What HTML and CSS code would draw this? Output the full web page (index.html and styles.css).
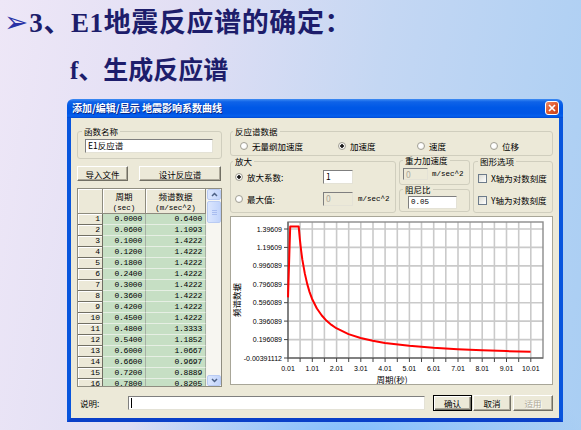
FILE: index.html
```html
<!DOCTYPE html>
<html lang="zh-CN">
<head>
<meta charset="utf-8">
<title>E1地震反应谱的确定</title>
<link rel="stylesheet" href="styles.css">
</head>
<body>
<div class="slide">
  <h1 class="h1"><span class="arrow">➢</span>3、E1地震反应谱的确定：</h1>
  <h2 class="h2">f、生成反应谱</h2>
  <div class="dialog">
    <div class="titlebar">
      <span class="title">添加/编辑/显示 地震影响系数曲线</span>
      <span class="close"><svg width="8" height="8" viewBox="0 0 8 8"><path d="M1 1L7 7M7 1L1 7" stroke="#fff" stroke-width="1.7"/></svg></span>
    </div>
    <div class="client">
      <div class="main">
        <div class="leftcol">
          <fieldset class="group g-name"><legend>函数名称</legend>
            <div class="edit name-edit">E1反应谱</div>
          </fieldset>
          <div class="btnrow"><button class="btn b-import">导入文件</button><button class="btn b-design">设计反应谱</button></div>
          <div class="grid">
            <div class="tbl">
              <div class="row hrow"><div class="hd"></div><div class="hd">周期<br><span class="unit">(sec)</span></div><div class="hd">频谱数据<br><span class="unit">(m/sec^2)</span></div></div>
              <div class="row"><div class="rn">1</div><div class="c">0.0000</div><div class="c">0.6400</div></div>
              <div class="row"><div class="rn">2</div><div class="c">0.0600</div><div class="c">1.1093</div></div>
              <div class="row"><div class="rn">3</div><div class="c">0.1000</div><div class="c">1.4222</div></div>
              <div class="row"><div class="rn">4</div><div class="c">0.1200</div><div class="c">1.4222</div></div>
              <div class="row"><div class="rn">5</div><div class="c">0.1800</div><div class="c">1.4222</div></div>
              <div class="row"><div class="rn">6</div><div class="c">0.2400</div><div class="c">1.4222</div></div>
              <div class="row"><div class="rn">7</div><div class="c">0.3000</div><div class="c">1.4222</div></div>
              <div class="row"><div class="rn">8</div><div class="c">0.3600</div><div class="c">1.4222</div></div>
              <div class="row"><div class="rn">9</div><div class="c">0.4200</div><div class="c">1.4222</div></div>
              <div class="row"><div class="rn">10</div><div class="c">0.4500</div><div class="c">1.4222</div></div>
              <div class="row"><div class="rn">11</div><div class="c">0.4800</div><div class="c">1.3333</div></div>
              <div class="row"><div class="rn">12</div><div class="c">0.5400</div><div class="c">1.1852</div></div>
              <div class="row"><div class="rn">13</div><div class="c">0.6000</div><div class="c">1.0667</div></div>
              <div class="row"><div class="rn">14</div><div class="c">0.6600</div><div class="c">0.9697</div></div>
              <div class="row"><div class="rn">15</div><div class="c">0.7200</div><div class="c">0.8889</div></div>
              <div class="row"><div class="rn">16</div><div class="c">0.7800</div><div class="c">0.8205</div></div>
            </div>
            <div class="scroll">
              <div class="sb"><svg width="7" height="5" viewBox="0 0 7 5"><path d="M1 4L3.5 1.5L6 4" stroke="#4d6185" stroke-width="1.5" fill="none"/></svg></div>
              <div class="sb thumb"><svg width="5" height="5" viewBox="0 0 5 5"><path d="M0 0.5H5M0 2.5H5M0 4.5H5" stroke="#a9bdf0" stroke-width="1"/></svg></div>
              <div class="track"></div>
              <div class="sb"><svg width="7" height="5" viewBox="0 0 7 5"><path d="M1 1L3.5 3.5L6 1" stroke="#4d6185" stroke-width="1.5" fill="none"/></svg></div>
            </div>
          </div>
        </div>
        <div class="rightcol">
          <fieldset class="group g-data"><legend>反应谱数据</legend>
            <div class="radios">
              <span class="opt o1"><span class="rb"></span>无量纲加速度</span>
              <span class="opt o2"><span class="rb on"></span>加速度</span>
              <span class="opt o3"><span class="rb"></span>速度</span>
              <span class="opt o4"><span class="rb"></span>位移</span>
            </div>
          </fieldset>
          <div class="optrow">
            <fieldset class="group g-scale"><legend>放大</legend>
              <div class="srow r1"><span class="opt so"><span class="rb on"></span>放大系数:</span><div class="edit num">1</div></div>
              <div class="srow r2"><span class="opt so"><span class="rb"></span>最大值:</span><div class="edit num dis">0</div><span class="u">m/sec^2</span></div>
            </fieldset>
            <div class="midcol">
              <fieldset class="group g-grav"><legend>重力加速度</legend>
                <div class="srow"><div class="edit gnum dis">0</div><span class="u">m/sec^2</span></div>
              </fieldset>
              <fieldset class="group g-damp"><legend>阻尼比</legend>
                <div class="edit dnum">0.05</div>
              </fieldset>
            </div>
            <fieldset class="group g-graph"><legend>图形选项</legend>
              <span class="chk"><span class="cb"></span>X轴为对数刻度</span>
              <span class="chk c2"><span class="cb"></span>Y轴为对数刻度</span>
            </fieldset>
          </div>
          <div class="chart">
            <svg class="plot" width="321" height="167" viewBox="0 0 321 167">
              <path class="gridl" d="M69.1 5V141M81.3 5V141M93.4 5V141M105.6 5V141M117.7 5V141M129.8 5V141M142 5V141M154.1 5V141M166.3 5V141M178.4 5V141M190.5 5V141M202.7 5V141M214.8 5V141M227 5V141M239.1 5V141M251.2 5V141M263.4 5V141M275.5 5V141M287.7 5V141M299.8 5V141M57 12H312M57 30.4H312M57 48.9H312M57 67.3H312M57 85.7H312M57 104.1H312M57 122.6H312"/>
              <rect class="frame" x="57" y="5" width="255" height="136"/>
              <path class="axis" d="M57 5V141H312"/>
              <path class="ticks" d="M57 141V145M69.1 141V145M81.3 141V145M93.4 141V145M105.6 141V145M117.7 141V145M129.8 141V145M142 141V145M154.1 141V145M166.3 141V145M178.4 141V145M190.5 141V145M202.7 141V145M214.8 141V145M227 141V145M239.1 141V145M251.2 141V145M263.4 141V145M275.5 141V145M287.7 141V145M299.8 141V145M53 141H57M53 122.6H57M53 104.1H57M53 85.7H57M53 67.3H57M53 48.9H57M53 30.4H57M53 12H57"/>
              <g class="ylab">
                <text x="51" y="14.5">1.39609</text>
                <text x="51" y="32.9">1.19609</text>
                <text x="51" y="51.4">0.996089</text>
                <text x="51" y="69.8">0.796089</text>
                <text x="51" y="88.2">0.596089</text>
                <text x="51" y="106.6">0.396089</text>
                <text x="51" y="125.1">0.196089</text>
                <text x="51" y="143.5">-0.00391112</text>
              </g>
              <g class="xlab">
                <text x="57" y="153.5">0.01</text>
                <text x="81.3" y="153.5">1.01</text>
                <text x="105.6" y="153.5">2.01</text>
                <text x="129.8" y="153.5">3.01</text>
                <text x="154.1" y="153.5">4.01</text>
                <text x="178.4" y="153.5">5.01</text>
                <text x="202.7" y="153.5">6.01</text>
                <text x="227" y="153.5">7.01</text>
                <text x="251.2" y="153.5">8.01</text>
                <text x="275.5" y="153.5">9.01</text>
                <text x="299.8" y="153.5">10.01</text>
              </g>
              <text class="ttl" x="161" y="165.5">周期(秒)</text>
              <text class="ttl" transform="translate(8.5 83) rotate(-90)">频谱数据</text>
              <path class="curve" d="M57 80.4L59.2 9.6L67.7 9.6L68.9 22.7L70.1 33.4L71.3 42.4L73.8 56.4L76.2 66.9L78.6 75.1L81 81.7L85.9 91.5L90.8 98.5L95.6 103.8L100.5 107.9L105.3 111.2L117.5 117.1L129.6 121L141.7 123.8L153.9 125.9L178.2 128.8L202.4 130.8L226.7 132.2L251 133.3L275.3 134.1L299.6 134.7"/>
            </svg>
          </div>
        </div>
      </div>
      <div class="bottom">
        <span class="lbl">说明:</span>
        <div class="edit desc"><span class="caret"></span></div>
        <button class="btn def">确认</button>
        <button class="btn cancel">取消</button>
        <button class="btn apply">适用</button>
      </div>
    </div>
  </div>
</div>
</body>
</html>
```

FILE: styles.css
```css
* { box-sizing: border-box; }
html, body { margin: 0; padding: 0; }
body {
  width: 581px; height: 430px; overflow: hidden;
  background:
    radial-gradient(ellipse 230px 110px at 355px 445px, rgba(120,186,255,0.9), rgba(120,186,255,0)),
    linear-gradient(100deg, #eee7f7 0%, #e2dff4 28%, #c4d7f3 60%, #a9cef3 100%);
  font-family: "Noto Sans CJK SC", sans-serif;
}
.h1 {
  margin: 0; padding: 6px 0 0 4px;
  font: 700 27px/32px "Liberation Serif", "Noto Sans CJK SC", serif;
  letter-spacing: 0.6px;
  color: #1d1d6b; white-space: nowrap;
}
.arrow { font: 400 29px/32px "DejaVu Sans", sans-serif; color: #2a33a6; margin-right: 1px; letter-spacing: 0; }
.h2 {
  margin: 17px 0 0; padding-left: 70px;
  font: 700 25px/30px "Liberation Serif", "Noto Sans CJK SC", serif;
  color: #1d1d6b;
}
.dialog { margin: 13px 0 0 67px; width: 496px; height: 323px; display: flex; flex-direction: column; }
.titlebar {
  height: 19px; flex: none; display: flex; align-items: center; justify-content: space-between;
  padding: 0 4px 1px 5px; border-radius: 6px 6px 0 0;
  background: linear-gradient(#3f8cf3 0%, #0f63e8 15%, #0058e6 45%, #0055e5 75%, #0560ee 90%, #0147d0 100%);
}
.title { color: #fff; font: 700 10px/12px "Noto Sans CJK SC", sans-serif; text-shadow: 1px 1px 0 #0a2a8a; white-space: nowrap; }
.close {
  width: 14px; height: 14px; border: 1px solid #fff; border-radius: 3px;
  background: linear-gradient(135deg, #f08a66, #e05a2e 50%, #c8401a);
  display: flex; align-items: center; justify-content: center;
}
.client {
  flex: 1; background: #ece9d8;
  border: 4px solid #0855dd; border-top: 0; border-bottom-color: #0a3fc8;
  padding: 9px 6px 0; font-size: 8.5px; line-height: 10px; color: #000;
}
.main { display: flex; gap: 8px; height: 260px; }
.leftcol { width: 145px; display: flex; flex-direction: column; }
.rightcol { width: 323px; display: flex; flex-direction: column; }
.group { margin: 0; padding: 0; border: 1px solid #d0cebe; border-radius: 3px; min-width: 0; }
.group legend { padding: 0 2px; margin-left: 4px; font-size: 8.5px; line-height: 9px; }
.g-data legend, .g-scale legend { margin-left: 2px; }
.g-grav legend, .g-damp legend { margin-left: 3px; }
.edit {
  background: #fff; border: 1px solid; border-color: #7f7f7f #e4e2d6 #e4e2d6 #7f7f7f;
  font-size: 8.5px; line-height: 11px; padding: 0 2px; white-space: nowrap;
}
.g-name { height: 32px; }
.name-edit { margin: 3px 0 0 7px; width: 128px; height: 14px; }
.btnrow { margin-top: 7px; height: 15px; display: flex; gap: 11px; }
.btn {
  font: 8.5px/12px "Noto Sans CJK SC", sans-serif; padding: 0; margin: 0;
  background: #ece9d8; color: #000; height: 15px; text-align: center;
  border: 1px solid; border-color: #fff #716f64 #716f64 #fff;
  box-shadow: inset -1px -1px #aca899;
}
.b-import { width: 51px; }
.b-design { width: 82px; }
.grid {
  margin-top: 7px; height: 199px; border: 1px solid #8f8d80;
  display: flex; background: #f5f4ee; overflow: hidden;
}
.tbl { width: 128px; overflow: hidden; }
.row { display: grid; grid-template-columns: 25px 43px 60px; height: 11px; }
.hrow { height: 25px; }
.hd {
  background: #ece9d8; border-right: 1px solid #8d8b7e; border-bottom: 1px solid #8d8b7e;
  box-shadow: inset 1px 1px #fff; text-align: center; padding-top: 2px;
  line-height: 10px; font-size: 8.5px; white-space: nowrap;
}
.unit { font: 7.5px "Liberation Mono", monospace; }
.rn {
  background: #ece9d8; border-right: 1px solid #716f64; border-bottom: 1px solid #716f64;
  box-shadow: inset 1px 1px #fff; text-align: right; padding-right: 2px;
  font: 8px/10px "Liberation Mono", monospace;
}
.c {
  background: #c6dfc4; border-right: 1px solid #a6b0a4; border-bottom: 1px solid #e6efe4;
  text-align: right; padding-right: 3px; font: 8px/10px "Liberation Mono", monospace;
  letter-spacing: -0.2px;
}
.scroll { width: 14px; margin-left: 1px; display: flex; flex-direction: column; background: #f7f6f1; }
.sb {
  height: 11px; flex: none; border: 1px solid #b9cbf3; border-radius: 2px;
  background: linear-gradient(90deg, #dbe6fe, #c2d4fb);
  display: flex; align-items: center; justify-content: center;
}
.thumb { height: 22px; margin-top: 1px; }
.track { flex: 1; }

.g-data { height: 29px; }
.radios { display: flex; padding: 5px 0 0 9px; }
.opt { display: flex; align-items: center; gap: 4px; white-space: nowrap; font-size: 8.5px; line-height: 10px; }
.o1 { width: 98px; }
.o2 { width: 79px; }
.o3 { width: 73px; }
.rb {
  width: 8px; height: 8px; border-radius: 50%; border: 1px solid #a3a197; flex: none;
  background: radial-gradient(circle at 40% 40%, #fff 40%, #e2e0d6);
}
.rb.on { background: radial-gradient(circle, #1a1a1a 0 1.5px, #fff 2px 45%, #e2e0d6); }
.optrow { display: flex; gap: 3px; height: 57px; }
.g-scale { width: 166px; margin-top: 1px; height: 56px; }
.srow { display: flex; align-items: center; }
.g-scale .srow { padding-left: 4px; }
.g-scale .r1 { margin-top: 4px; height: 14px; }
.g-scale .r2 { margin-top: 7px; height: 15px; }
.so { width: 88px; }
.num { width: 30px; height: 14px; }
.dis { background: #ece9d8; color: #aca899; }
.u { font: 7.5px/10px "Liberation Mono", monospace; margin-left: 5px; white-space: nowrap; }
.midcol { width: 71px; display: flex; flex-direction: column; }
.g-grav { height: 29px; }
.g-grav .srow { padding: 3px 0 0 3px; }
.gnum { width: 25px; height: 12px; line-height: 10px; }
.g-grav .u { margin-left: 4px; }
.g-damp { height: 27px; }
.dnum { margin: 2px 0 0 8px; width: 49px; height: 13px; font: 7.5px/11px "Liberation Mono", monospace; }
.g-graph { width: 80px; margin-top: 1px; height: 56px; }
.chk { display: flex; align-items: center; gap: 4px; padding-left: 4px; font-size: 8.5px; line-height: 10px; white-space: nowrap; margin-top: 7px; }
.chk.c2 { margin-top: 12px; }
.cb { width: 9px; height: 9px; border: 1px solid #6d7b8a; background: linear-gradient(135deg, #dcdbd3, #fff); flex: none; }
.chart { margin-top: 3px; height: 169px; background: #fff; border: 1px solid #a8a698; overflow: hidden; }
.plot { display: block; }
.gridl { stroke: #cacaca; stroke-width: 1.6; fill: none; }
.frame { fill: none; stroke: #8c8c8c; stroke-width: 1.4; }
.axis { fill: none; stroke: #555; stroke-width: 1; }
.ticks { fill: none; stroke: #444; stroke-width: 1; }
.ylab text { font: 7px "Liberation Sans", sans-serif; text-anchor: end; fill: #000; }
.xlab text { font: 7px "Liberation Sans", sans-serif; text-anchor: middle; fill: #000; }
.ttl { font: 8.5px "Noto Sans CJK SC", sans-serif; text-anchor: middle; fill: #000; }
.curve { fill: none; stroke: #ff0000; stroke-width: 2; stroke-linejoin: round; }

.bottom { display: flex; align-items: center; margin-top: 8px; height: 16px; }
.lbl { width: 51px; padding-left: 3px; font-size: 8.5px; }
.desc { width: 297px; height: 14px; padding-left: 2px; display: flex; align-items: center; }
.caret { width: 1px; height: 10px; background: #000; }
.bottom .btn { height: 16px; }
.def {
  margin-left: 8px; width: 39px; border: 1px solid #000;
  box-shadow: inset 1px 1px #fff, inset -1px -1px #716f64, inset -2px -2px #aca899;
}
.cancel { margin-left: 1px; width: 38px; }
.apply { margin-left: 2px; width: 40px; color: #aca899; text-shadow: 1px 1px #fff; }
```
